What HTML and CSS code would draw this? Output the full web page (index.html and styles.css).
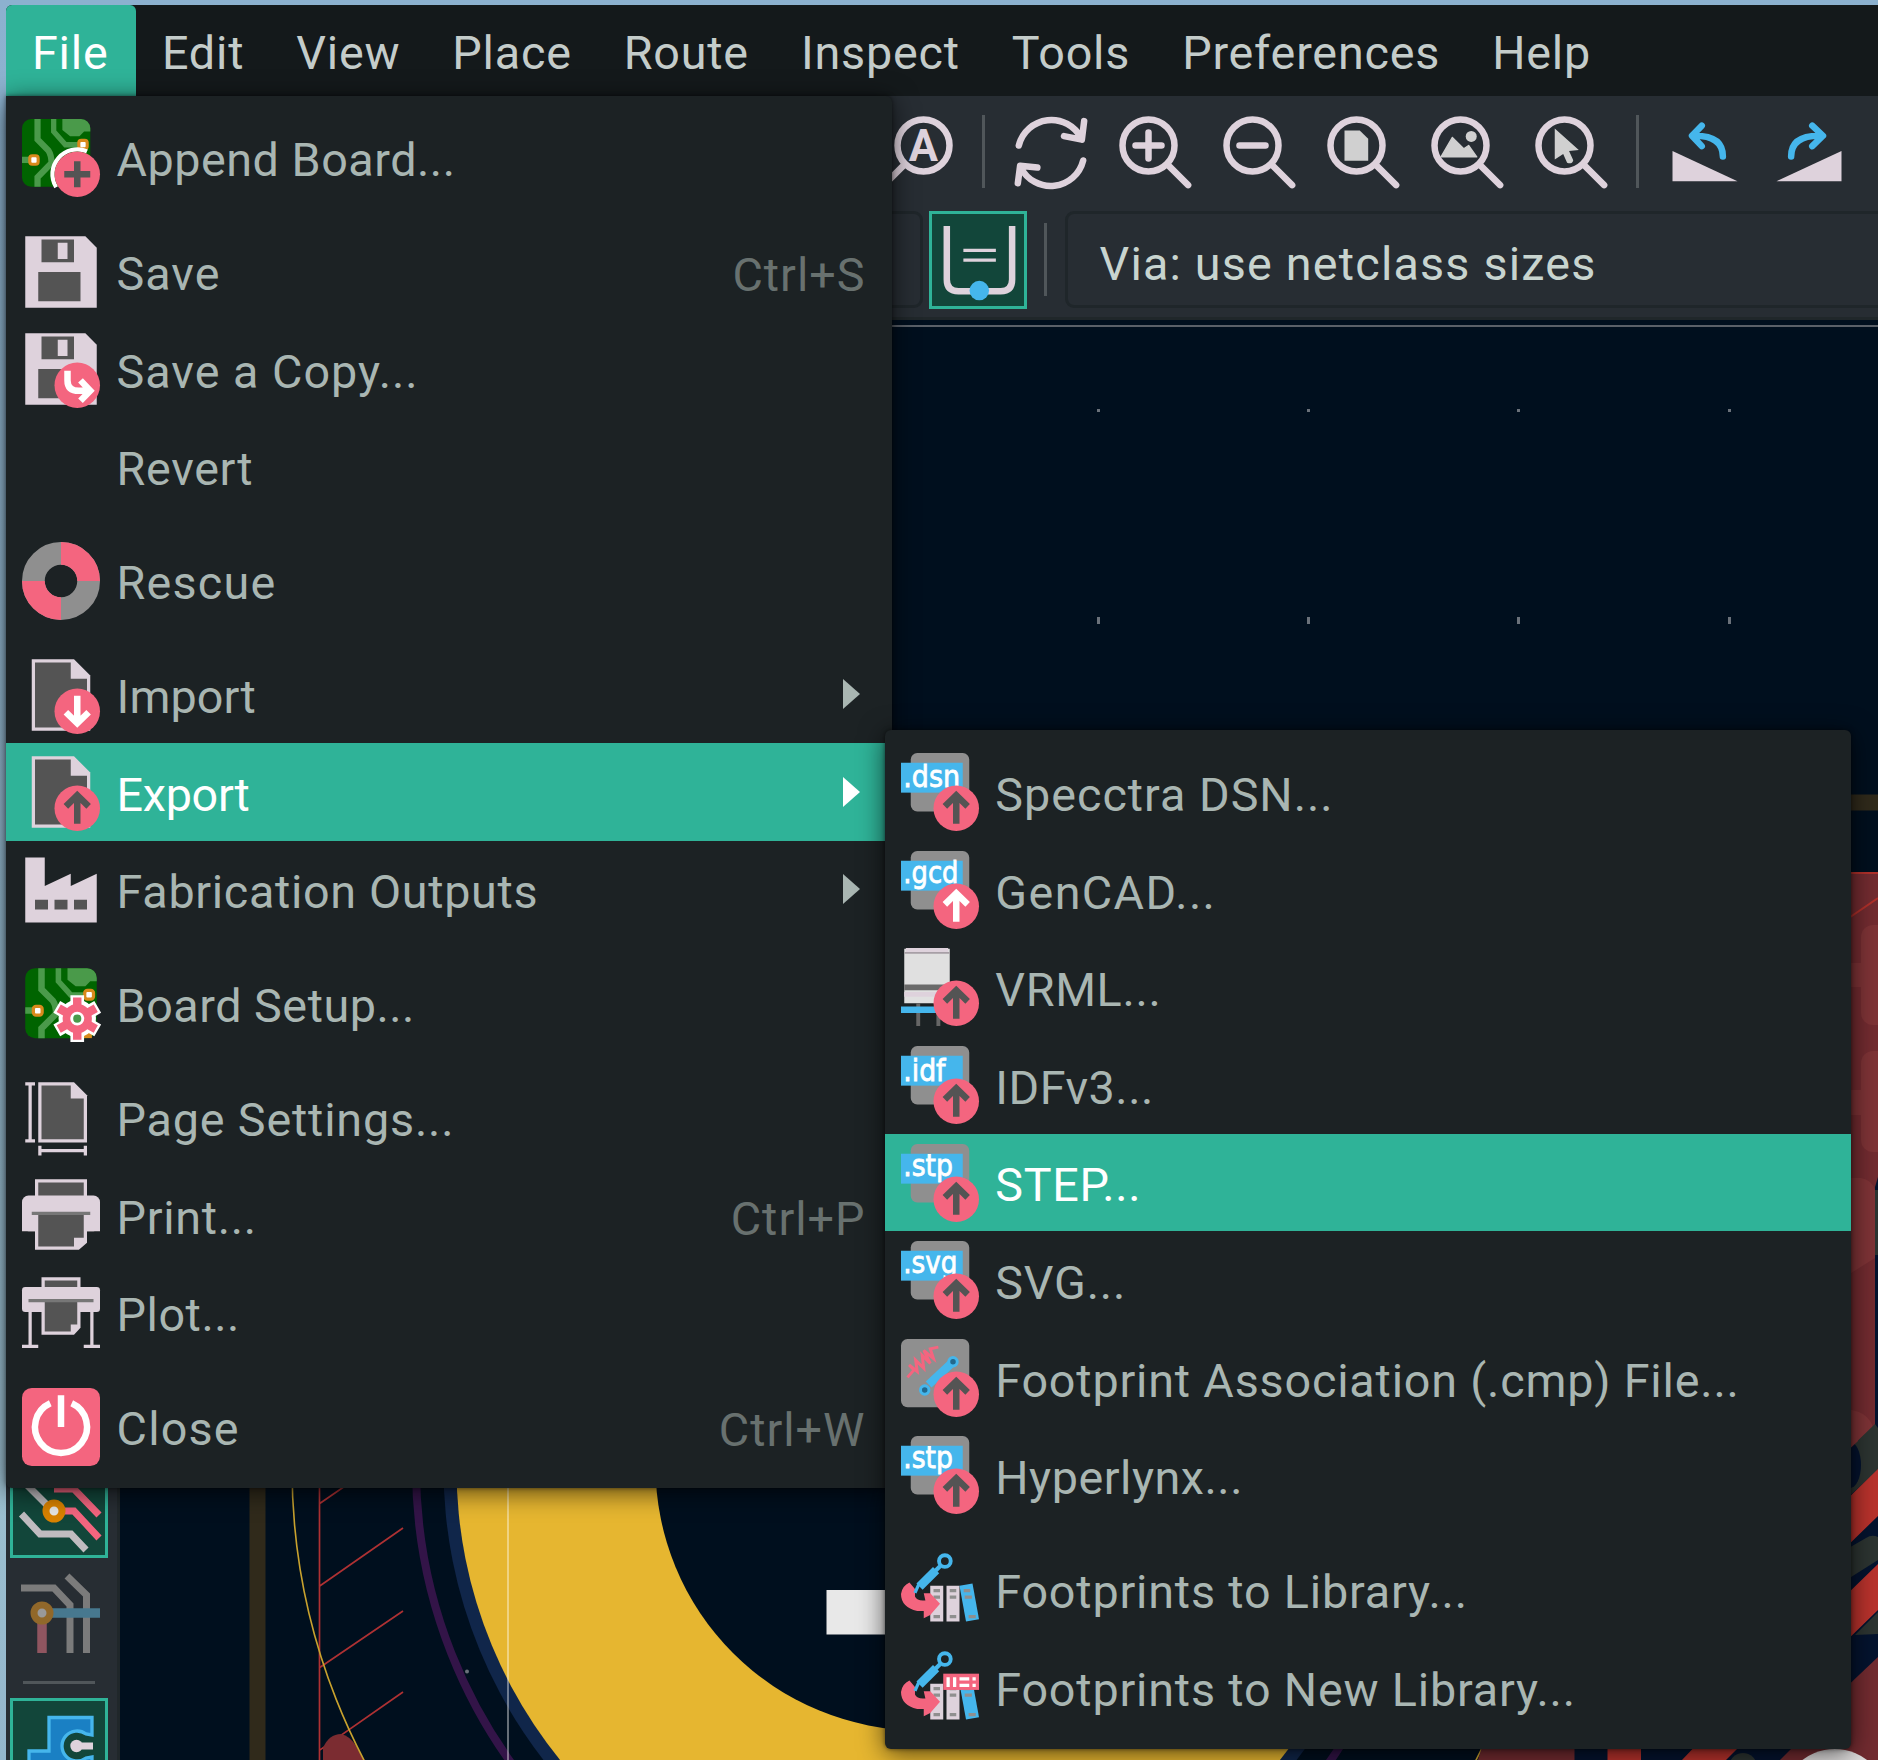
FILE: index.html
```html
<!DOCTYPE html>
<html lang="en">
<head>
<meta charset="utf-8">
<title>PCB Editor</title>
<link rel="stylesheet" href="styles.css">
</head>
<body>
<svg class="defs" width="0" height="0">
  <defs>
    <g id="board">
      <rect x="1" y="1" width="22" height="21.5" rx="3" fill="#006400"/>
      <g fill="none" stroke="#4a9a4a" stroke-width="2">
        <path d="M6 1V7.5L9.5 11Q10.5 12.5 10.5 15L6 19.5V22.5"/>
        <path d="M11.2 1V5L15 9.2H19" stroke-width="1.7"/>
        <path d="M1 14H5"/>
      </g>
      <path d="M14 1H20A3 3 0 0 1 23 4V5H21L19.5 6.5H16.5L14 4.5Z" fill="#4a9a4a"/>
      <g fill="#fff" stroke="#d98a1c" stroke-width="1"><rect x="3.5" y="12.7" width="2.7" height="2.7" rx=".8"/><rect x="19.3" y="7.8" width="2.7" height="2.7" rx=".8"/></g>
    </g>
    <g id="floppy">
      <path d="M1 1H19.5L23 4.5V23H1Z" fill="#ded2dc"/>
      <path d="M6 2H16V9H6ZM5 12H18V21H5Z" fill="#545454"/>
      <path d="M11 3H14V8H11Z" fill="#ded2dc"/>
    </g>
    <g id="page">
      <path d="M3 1H16L21 6V23H3Z" fill="#ded2dc"/>
      <path d="M4 2H15V7H20V22H4Z" fill="#545454"/>
    </g>
    <circle id="badge" cx="17" cy="17" r="7" fill="#f4657f"/>
    <g id="up"><use href="#badge"/><path d="M17 21.8V13.2M13.5 16.4L17 13L20.5 16.4" fill="none" stroke="#545454" stroke-width="2"/></g>
    <g id="upw"><use href="#badge"/><path d="M17 21.8V13.2M13.5 16.4L17 13L20.5 16.4" fill="none" stroke="#fff" stroke-width="2"/></g>
    <g id="ext"><rect x="3" width="18" height="18" rx="2" fill="#8f8f8f"/><rect y="3" width="19" height="9.2" fill="#45b6ec"/></g>
    <g id="lens" fill="none" stroke="#ded2dc" stroke-width="2" stroke-linecap="round"><circle cx="10" cy="10" r="8"/><path d="M15.8 15.8L22.2 22.2"/></g>
    <g id="library">
      <path d="M9 11H13V22H9ZM14 11H18V22H14Z" fill="#ded2dc"/>
      <path d="M18 11L22 10.3L24 21.3L20 22Z" fill="#45b6ec"/>
      <path d="M10 12.5H12M10 14.5H12M10 20.5H12M15 12.5H17M15 14.5H17M15 20.5H17M19.3 12.5H21.3M19.6 14.5H21.8M20.8 20.5H23" stroke="#8f8f8f"/>
      <path d="M2.6 10L4.3 12V14.3Q5 15.800 7.500 15.500L7 13.300L9 13.300L12 16.500L9 20L7 21V18.800H5Q0 17.500 0 13.500Q.4 11 2.600 10Z" fill="#f4657f"/>
      <circle cx="13.5" cy="3.4" r="1.8" fill="none" stroke="#45b6ec" stroke-width="1.2"/>
      <path d="M12 5L10 7" stroke="#45b6ec" stroke-width="1.3"/>
      <path d="M10.8 6.2L5.7 11.3" stroke="#45b6ec" stroke-width="2.7"/>
      <path d="M5.5 10.5L4.3 13.2" stroke="#45b6ec" stroke-width="1"/>
    </g>
  </defs>
</svg>

<div class="app">
  <nav class="menubar">
    <span class="menubar-item active">File</span><span class="menubar-item">Edit</span><span class="menubar-item">View</span><span class="menubar-item">Place</span><span class="menubar-item">Route</span><span class="menubar-item">Inspect</span><span class="menubar-item">Tools</span><span class="menubar-item">Preferences</span><span class="menubar-item">Help</span>
  </nav>

  <div class="toolbar">
    <span class="tool"><svg class="icon" viewBox="0 0 24 24"><use href="#lens" transform="matrix(-1 0 0 1 24 0)"/><text class="lens-letter" x="14" y="14.8">A</text></svg></span>
    <span class="divider"></span>
    <span class="tool"><svg class="icon" viewBox="0 0 24 24" fill="none" stroke="#ded2dc" stroke-width="2" stroke-linecap="round" stroke-linejoin="round"><path d="M2.1 10A10.3 10.3 0 0 1 21.3 7.800M22.2 2.500L21.5 8.200L16 7.100M21.9 14.6A10.3 10.3 0 0 1 2.7 16.8M1.8 21.6L2.5 16.2L7.8 16.8"/></svg></span>
    <span class="tool"><svg class="icon" viewBox="0 0 24 24"><use href="#lens"/><path d="M6 10H14M10 6V14" stroke="#ded2dc" stroke-width="2" stroke-linecap="round"/></svg></span>
    <span class="tool"><svg class="icon" viewBox="0 0 24 24"><use href="#lens"/><path d="M6 10H14" stroke="#ded2dc" stroke-width="2" stroke-linecap="round"/></svg></span>
    <span class="tool"><svg class="icon" viewBox="0 0 24 24"><use href="#lens"/><path d="M6.3 5.4H11L13.6 7.9V14.7H6.3Z" fill="#d0d0d0"/></svg></span>
    <span class="tool"><svg class="icon" viewBox="0 0 24 24"><use href="#lens"/><path d="M4 13.5L7.5 7.5L11 11L12.5 10L15 13.5Z" fill="#d0d0d0" stroke="#d0d0d0" stroke-width=".4" stroke-linejoin="round"/><circle cx="13.3" cy="7.2" r="1.7" fill="#d0d0d0"/></svg></span>
    <span class="tool"><svg class="icon" viewBox="0 0 24 24"><use href="#lens"/><path d="M7 4.8L14.4 11.4L11.4 11.7L12.7 14.5Q12.3 15.9 10.8 15.3L9.6 12.6L7 14.3Z" fill="#d0d0d0"/></svg></span>
    <span class="divider"></span>
    <span class="tool"><svg class="icon" viewBox="0 0 24 24"><path d="M2 11.7V21H22Z" fill="#ded2dc"/><path d="M17.5 13.4Q17.5 7 9 7M11 3.9L8 7L11 10.2" fill="none" stroke="#45b6ec" stroke-width="2" stroke-linecap="round" stroke-linejoin="round"/></svg></span>
    <span class="tool"><svg class="icon" viewBox="0 0 24 24"><path d="M22 11.7V21H2Z" fill="#ded2dc"/><path d="M6.5 13.4Q6.5 7 15 7M13 3.9L16.3 7L13 10.2" fill="none" stroke="#45b6ec" stroke-width="2" stroke-linecap="round" stroke-linejoin="round"/></svg></span>
  </div>

  <div class="options">
    <div class="combo combo-track"></div>
    <span class="toggle"><svg class="icon" viewBox="0 0 24 24"><path d="M2.4 1.5V18Q2.4 21.6 6 21.6H19Q22.5 21.6 22.5 18V1.5" fill="none" stroke="#ded2dc" stroke-width="2"/><path d="M7.5 9H17.5M7.5 12H17.5" stroke="#ded2dc"/><circle cx="12.4" cy="21.4" r="3" fill="#45b6ec"/></svg></span>
    <span class="divider"></span>
    <div class="combo combo-via">Via: use netclass sizes</div>
  </div>

  <div class="work">
    <aside class="sidebar">
      <span class="side-tool on"><svg class="icon" viewBox="0 0 78 78" fill="none" stroke-width="7">
        <path d="M4 12L30 38M1.5 44L20 64H51L66 80" stroke="#c0bcc0"/><path d="M34 19H54L79 45M40 41H54L79 68" stroke="#f4657f"/>
        <circle cx="34" cy="41" r="8" stroke="#d98200" fill="#e6e6e6"/></svg></span>
      <span class="side-tool"><svg class="icon" viewBox="0 0 78 78" fill="none" stroke-width="7">
        <path d="M1 15H34L50 32V80M47 3L66.5 22V80" stroke="#7b7b7b"/><path d="M30 40H80" stroke="#47788f" stroke-width="9.5"/><path d="M22 45V80" stroke="#905560" stroke-width="9.5"/>
        <circle cx="22" cy="40" r="8" stroke="#91682a" fill="#999"/></svg></span>
      <span class="side-rule"></span>
      <span class="side-tool on"><svg class="icon" viewBox="0 0 78 78"><path d="M29 9.5H72V27L66 26A15 15 0 1 0 66 50L72 49V70H9V43H29Z" fill="#1a80c4" stroke="#45b6ec" stroke-width="3.3"/><path d="M56 38H73" stroke="#ded2dc" stroke-width="7"/><circle cx="56.5" cy="38" r="6.2" fill="#ded2dc"/></svg></span>
    </aside>
    <svg class="canvas" viewBox="120 320 1758 1440">
      <rect x="120" y="320" width="1758" height="1440" fill="#000f1e"/>
      <path d="M120 326H1878" stroke="#5a6068" stroke-width="2"/>
      <g fill="#6a717a"><path d="M1097 409h3v3h-3zM1307 409h3v3h-3zM1517 409h3v3h-3zM1728 409h3v3h-3zM1097 617h3v7h-3zM1307 617h3v7h-3zM1517 617h3v7h-3zM1728 617h3v7h-3z"/><circle cx="467" cy="1671.500" r="2"/></g>
      <path d="M257.500 1760V802.500H1878" fill="none" stroke="#302a1b" stroke-width="16"/>
      <g fill="none" stroke="#ae3133" stroke-width="1.700"><path d="M319.500 1400V1760M319 1504L403 1446M319 1586.500L403 1528M319 1668L403 1611M319 1750.600L403 1692"/></g>
      <path d="M323 1760V1748Q329 1734 341 1734Q350 1736 356 1746L364 1760Z" fill="#7b2c31"/>
      <circle cx="920" cy="1468" r="628" fill="none" stroke="#c8a22e" stroke-width="1.600"/>
      <circle cx="920" cy="1468" r="504" fill="none" stroke="#331448" stroke-width="8"/>
      <circle cx="920" cy="1468" r="476.500" fill="#10264a"/>
      <circle cx="920" cy="1468" r="463.500" fill="#e6b630"/>
      <circle cx="920" cy="1466" r="264.500" fill="#000f1e"/>
      <path d="M508 1400V1760" stroke="#fff" stroke-opacity=".5" stroke-width="1.600"/>
      <rect x="826.500" y="1590" width="90" height="44.500" fill="#e8e8e8"/>
      <g>
        <path d="M1484 1740H1878V1760H1478Z" fill="#722b30"/>
        <path d="M1574.500 1740H1800L1780 1760H1574.500Z" fill="#04132e"/>
        <path d="M1607.500 1740H1641V1760H1607.500ZM1701 1740H1746L1726 1760H1682Z" fill="#b8322c"/>
        <circle cx="1743" cy="1767" r="14" fill="#2c3431"/>
        <path d="M1840 872H1878V1760H1840Z" fill="#04132e"/>
        <path d="M1840 872H1878V1177L1875 1187V1425L1840 1458Z" fill="#722b30"/>
        <g fill="#7e3336"><rect x="1861" y="925" width="30" height="100" rx="12"/><rect x="1861" y="1051" width="30" height="101" rx="12"/><path d="M1840 963H1861V987H1840ZM1840 1090H1861V1115H1840ZM1840 1178H1861Q1872 1180 1875 1190V1258L1840 1280ZM1840 1410H1852Q1868 1413 1873 1427L1840 1458Z"/></g>
        <path d="M1875 1190H1878V1255H1875ZM1875 1424L1878 1428V1470L1845 1500V1453Z" fill="#2c3431"/>
        <ellipse cx="1850" cy="1465" rx="11" ry="23" fill="#04132e"/>
        <path d="M1840 1430V1458L1858 1441V1430Z" fill="#7e3336"/>
        <path d="M1840 1506L1878 1469V1516L1840 1553ZM1840 1601L1878 1564V1610L1840 1647Z" fill="#b8322c"/>
        <path d="M1840 1553L1866 1538Q1872 1534 1878 1537V1560L1840 1584ZM1855 1635L1878 1612V1634Z" fill="#2c3431"/>
        <path d="M1840 1693L1878 1657V1760H1840Z" fill="#722b30"/>
        <path d="M1840 873H1878M1840 924L1878 898" fill="none" stroke="#b0302a" stroke-width="2"/>
        <circle cx="1834.700" cy="1802" r="53" fill="#e0dede"/>
      </g>
    </svg>
  </div>
</div>

<div class="menu menu-file">
  <div class="item snug"><svg class="icon" viewBox="0 0 24 24"><use href="#board" transform="translate(-.95 -1) scale(.955 .97)"/><path d="M10.500 21A7.650 7.650 0 0 1 20 9.950" fill="none" stroke="#fff" stroke-width="1.300"/><use href="#badge"/><path d="M13 17H21M17 13V21" stroke="#545454" stroke-width="2"/></svg><span>Append Board...</span></div>
  <div class="gap"></div>
  <div class="item"><svg class="icon" viewBox="0 0 24 24"><use href="#floppy"/></svg><span>Save</span><kbd>Ctrl+S</kbd></div>
  <div class="item"><svg class="icon" viewBox="0 0 24 24"><use href="#floppy"/><use href="#badge"/><path d="M14 12.500V15.500Q14 18.700 17.500 18.700H20M18 15.500L21 18.700L18 21.800" fill="none" stroke="#fff" stroke-width="2"/></svg><span>Save a Copy...</span></div>
  <div class="item close"><svg class="icon" viewBox="0 0 24 24"></svg><span>Revert</span></div>
  <div class="gap"></div>
  <div class="item loose"><svg class="icon" viewBox="0 0 24 24" fill="none" stroke-width="7"><circle cx="12" cy="12" r="8.500" stroke="#8f8f8f"/><path d="M12 3.500A8.500 8.500 0 0 1 20.500 12M12 20.500A8.500 8.500 0 0 1 3.500 12" stroke="#f4657f"/></svg><span>Rescue</span></div>
  <div class="gap"></div>
  <div class="item tight"><svg class="icon" viewBox="0 0 24 24"><use href="#page"/><use href="#badge"/><path d="M17 12.200V20.500M13.500 17.300L17 20.700L20.500 17.300" fill="none" stroke="#fff" stroke-width="2"/></svg><span>Import</span><i class="arrow"></i></div>
  <div class="item tightest selected"><svg class="icon" viewBox="0 0 24 24"><use href="#page"/><use href="#up"/></svg><span>Export</span><i class="arrow"></i></div>
  <div class="item close"><svg class="icon" viewBox="0 0 24 24"><path d="M1 2H7V10.800L15 7V10.800L23 7V22H1Z" fill="#ded2dc"/><path d="M4 15H8V18H4ZM10 15H14V18H10ZM16 15H20V18H16Z" fill="#545454"/></svg><span>Fabrication Outputs</span><i class="arrow"></i></div>
  <div class="gap"></div>
  <div class="item snug"><svg class="icon" viewBox="0 0 24 24"><use href="#board"/><rect x="19" y="20.500" width="2.500" height="2" fill="#d98a1c"/><g fill="none" stroke="#fff"><circle cx="17" cy="16.500" r="3.500" stroke-width="4.500"/><path d="M17 9.300V23.700M10.700 12.900L23.300 20.100M10.700 20.100L23.300 12.900" stroke-width="4.200"/></g><path d="M17 10V23M11.300 13.300L22.700 19.700M11.300 19.700L22.700 13.300" stroke="#f4657f" stroke-width="2.600"/><circle cx="17" cy="16.500" r="4.500" fill="#f4657f"/><circle cx="17" cy="16.500" r="1.700" fill="#4a9a4a" stroke="#fff" stroke-width=".9"/></svg><span>Board Setup...</span></div>
  <div class="gap"></div>
  <div class="item near"><svg class="icon" viewBox="0 0 24 24"><path d="M5 1H16L20 5V19.500H5Z" fill="#ded2dc"/><path d="M6 2H15V6H19V18.500H6Z" fill="#545454"/><path d="M1 1.500H4M1 19H4M2.500 1.500V19M5.500 20.500V23.500M19.500 20.500V23.500M5.500 22H19.500" stroke="#ded2dc"/></svg><span>Page Settings...</span></div>
  <div class="item close"><svg class="icon" viewBox="0 0 24 24"><rect y="6" width="24" height="11" rx="2" fill="#ded2dc"/><path d="M0 12H24V17H0ZM4 1H20V20.500L17.500 22.700H4Z" fill="#ded2dc"/><path d="M5 2H19V6H5ZM5 11.500H19V19H16V21.700H5Z" fill="#545454"/><path d="M3 11.500H21" stroke="#777"/></svg><span>Print...</span><kbd>Ctrl+P</kbd></div>
  <div class="item snug"><svg class="icon" viewBox="0 0 24 24"><rect y="4" width="24" height="7.700" rx="1" fill="#ded2dc"/><path d="M6 1H18V16.500L16 18.700H6Z" fill="#ded2dc"/><path d="M7 2H17V4H7ZM7 8H17V15.500H15V17.700H7Z" fill="#545454"/><path d="M2 8.200H22" stroke="#777"/><path d="M2.500 11V22M21.500 11V22M0 22.300H5M19 22.300H24" stroke="#ded2dc"/></svg><span>Plot...</span></div>
  <div class="gap"></div>
  <div class="item loose"><svg class="icon" viewBox="0 0 24 24"><rect width="24" height="24" rx="3" fill="#f4657f"/><path d="M8.700 4.700A8 8 0 1 0 15.300 4.700M12 2.200V12" fill="none" stroke="#fff" stroke-width="2"/></svg><span>Close</span><kbd>Ctrl+W</kbd></div>
</div>

<div class="menu menu-export">
  <div class="item"><svg class="icon" viewBox="0 0 24 24"><use href="#ext"/><text class="ext" x=".7" y="10.500" textLength="17.500" lengthAdjust="spacingAndGlyphs">.dsn</text><use href="#up"/></svg><span>Specctra DSN...</span></div>
  <div class="item loosest"><svg class="icon" viewBox="0 0 24 24"><use href="#ext"/><text class="ext" x=".7" y="9.800" textLength="17" lengthAdjust="spacingAndGlyphs">.gcd</text><use href="#upw"/></svg><span>GenCAD...</span></div>
  <div class="item close"><svg class="icon" viewBox="0 0 24 24"><path d="M1 .2H15V17H1Z" fill="#e0e0e0"/><path d="M1.500 0H14.500V1.200H1.500ZM1 13.500H15V15H1Z" fill="#ded2dc"/><path d="M1 1.500H15" stroke="#a79fa6" stroke-width=".6"/><path d="M1 11.200H15V13H1Z" fill="#6a6a6a"/><path d="M5.300 17V24M11.500 17V24" stroke="#666" stroke-width="1.200"/><path d="M0 19H13" stroke="#45b6ec" stroke-width="2"/><use href="#up"/></svg><span>VRML...</span></div>
  <div class="item snug"><svg class="icon" viewBox="0 0 24 24"><use href="#ext"/><text class="ext" x=".7" y="10.800" textLength="13" lengthAdjust="spacingAndGlyphs">.idf</text><use href="#up"/></svg><span>IDFv3...</span></div>
  <div class="item close selected"><svg class="icon" viewBox="0 0 24 24"><use href="#ext"/><text class="ext" x=".7" y="9.800" textLength="15.300" lengthAdjust="spacingAndGlyphs">.stp</text><use href="#up"/></svg><span>STEP...</span></div>
  <div class="item near"><svg class="icon" viewBox="0 0 24 24"><use href="#ext"/><text class="ext" x=".7" y="9.800" textLength="16.700" lengthAdjust="spacingAndGlyphs">.svg</text><use href="#up"/></svg><span>SVG...</span></div>
  <div class="item near"><svg class="icon" viewBox="0 0 24 24"><rect width="21" height="21" rx="2" fill="#8f8f8f"/><path d="M2 11.800L4 9.500L2.500 8L5 10L4.500 6.500L7 9L6.500 5L9 7.500L7 3.500L10 6L9 3L11.500 2.500" fill="none" stroke="#f4657f" stroke-width=".9"/><path d="M8.500 14L15.500 7.500" stroke="#45b6ec" stroke-width="2.600"/><g fill="#24688c" stroke="#45b6ec" stroke-width=".9"><circle cx="7.300" cy="15.700" r="1.300"/><circle cx="16" cy="7" r="1.300"/></g><use href="#up"/></svg><span>Footprint Association (.cmp) File...</span></div>
  <div class="item snug"><svg class="icon" viewBox="0 0 24 24"><use href="#ext"/><text class="ext" x=".7" y="9.800" textLength="15.300" lengthAdjust="spacingAndGlyphs">.stp</text><use href="#up"/></svg><span>Hyperlynx...</span></div>
  <div class="gap"></div>
  <div class="item near"><svg class="icon" viewBox="0 0 24 24"><use href="#library"/></svg><span>Footprints to Library...</span></div>
  <div class="item near"><svg class="icon" viewBox="0 0 24 24"><use href="#library"/><rect x="13" y="7.900" width="11" height="5" fill="#f4657f"/><path d="M14.500 9V12M16.500 9V12M18 9.500H21M18 11.500H21M22 9.500H23M22 11.500H23" stroke="#fff"/></svg><span>Footprints to New Library...</span></div>
</div>
</body>
</html>
```
FILE: styles.css
```css
* { box-sizing: border-box; }
html, body { margin: 0; height: 1760px; overflow: hidden; }
body {
  position: relative;
  background: linear-gradient(#8cb1cf, #9cc0d0 85%, #94b6cc);
  font-family: Roboto, "Liberation Sans", sans-serif;
  font-size: 46.7px;
  letter-spacing: 1px;
}
.defs { position: absolute; }
.icon { width: 78px; height: 78px; flex: none; display: block; overflow: visible; }

.app { height: 1760px; padding: 5px 0 0 6px; display: flex; flex-direction: column; }
.menubar {
  height: 90.5px; flex: none; display: flex;
  background: #14191b; color: #c4ccca; letter-spacing: .8px;
  border-top-left-radius: 6px;
}
.menubar-item { padding: 0 26px; line-height: 97px; }
.menubar-item.active { background: #2fb398; color: #fff; border-radius: 6px 6px 0 0; padding-right: 27.500px; }

.toolbar {
  height: 111.5px; flex: none; display: flex; align-items: center;
  padding: 1px 0 0 858.700px; background: #272d33;
}
.tool { width: 104px; flex: none; display: flex; justify-content: center; }
.divider { width: 30px; height: 73px; flex: none; display: flex; justify-content: center; }
.divider::before { content: ""; width: 3.200px; background: #50565a; }
.lens-letter { font: 700 13.400px Roboto, sans-serif; letter-spacing: 0; text-anchor: middle; fill: #ded2dc; }

.options {
  height: 113px; flex: none; display: flex; align-items: center;
  padding: 3px 0 8px; background: #272d33; border-bottom: 3px solid #20272a; overflow: hidden;
}
.combo { height: 97px; border: 3px solid #1f262a; border-radius: 9px; }
.combo-track { width: 916.500px; flex: none; }
.combo-via { flex: none; width: 860px; padding-left: 32px; line-height: 100px; color: #c8d4cf; margin-left: 4px; letter-spacing: 1.200px; }
.toggle {
  width: 98px; height: 98px; flex: none; margin: 0 4px 0 6px;
  display: flex; align-items: center; justify-content: center;
  background: #12463a; border: 3.250px solid #2fb398;
}

.work { flex: 1; display: flex; min-height: 0; }
.canvas { flex: none; width: 1758px; height: 1440px; display: block; }
.sidebar {
  width: 114px; flex: none; display: flex; flex-direction: column; justify-content: flex-end; align-items: center;
  padding-right: 5px; background: #272d33; border-right: 3px solid #20272a; overflow: hidden;
}
.side-tool { width: 98px; height: 98px; margin-bottom: 5.600px; flex: none; display: flex; align-items: center; justify-content: center; }
.side-tool.on { background: #12463a; border: 3.250px solid #2fb398; }
.side-tool:last-child { margin-bottom: -36px; }
.side-rule { width: 72px; height: 3.200px; margin: 14px 0; background: #50565a; }

.menu {
  position: absolute; padding: 13.200px 0 12px;
  background: #1c2224; color: #a9b6b2; border-radius: 6px;
  box-shadow: 0 4px 26px rgba(0, 0, 0, .65), 0 0 4px rgba(0, 0, 0, .5);
}
.menu-file { left: 6px; top: 95.700px; width: 885.500px; height: 1392.300px; border-radius: 0 6px 6px 6px; }
.menu-export { left: 884.700px; top: 730.300px; width: 966.600px; height: 1018.500px; }
.item { height: 97.600px; padding: 0 26px 0 16.300px; display: flex; align-items: center; gap: 16.300px; white-space: nowrap; }
.item > span { line-height: 97.600px; padding-top: 7px; }
.item.loosest > span { letter-spacing: 1.400px; }
.item.loose > span { letter-spacing: 1.200px; }
.item.near > span { letter-spacing: .820px; }
.item.close > span { letter-spacing: .680px; }
.item.snug > span { letter-spacing: .520px; }
.item.tight > span { letter-spacing: .100px; }
.item.tightest > span { letter-spacing: -.300px; }
.selected { background: #2fb398; color: #fff; }
.gap { height: 16.300px; }
kbd { margin-left: auto; font: inherit; color: #68716f; padding-top: 7px; }
.arrow { margin: 0 6px 1px auto; border: 15.500px solid transparent; border-left: 17px solid #a9b6b2; border-right: 0; }
.selected .arrow { border-left-color: #fff; }
.ext { font: 9.500px "DejaVu Sans", sans-serif; letter-spacing: 0; fill: #fff; stroke: #fff; stroke-width: .25px; }
```
